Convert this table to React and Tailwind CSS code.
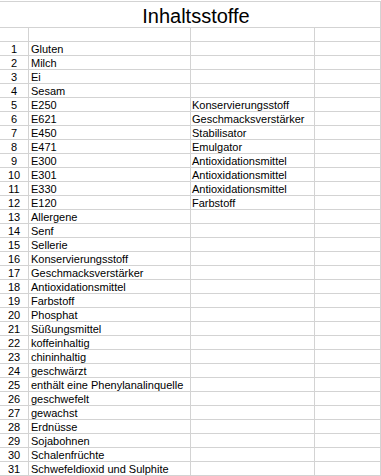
const rows = [
  ["", "", ""],
  ["1", "Gluten", ""],
  ["2", "Milch", ""],
  ["3", "Ei", ""],
  ["4", "Sesam", ""],
  ["5", "E250", "Konservierungsstoff"],
  ["6", "E621", "Geschmacksverstärker"],
  ["7", "E450", "Stabilisator"],
  ["8", "E471", "Emulgator"],
  ["9", "E300", "Antioxidationsmittel"],
  ["10", "E301", "Antioxidationsmittel"],
  ["11", "E330", "Antioxidationsmittel"],
  ["12", "E120", "Farbstoff"],
  ["13", "Allergene", ""],
  ["14", "Senf", ""],
  ["15", "Sellerie", ""],
  ["16", "Konservierungsstoff", ""],
  ["17", "Geschmacksverstärker", ""],
  ["18", "Antioxidationsmittel", ""],
  ["19", "Farbstoff", ""],
  ["20", "Phosphat", ""],
  ["21", "Süßungsmittel", ""],
  ["22", "koffeinhaltig", ""],
  ["23", "chininhaltig", ""],
  ["24", "geschwärzt", ""],
  ["25", "enthält eine Phenylanalinquelle", ""],
  ["26", "geschwefelt", ""],
  ["27", "gewachst", ""],
  ["28", "Erdnüsse", ""],
  ["29", "Sojabohnen", ""],
  ["30", "Schalenfrüchte", ""],
  ["31", "Schwefeldioxid und Sulphite", ""],
];

export default function App() {
  return (
    <div
      className="w-[381px] h-[476px] bg-white text-black overflow-hidden"
      style={{ fontFamily: '"Liberation Sans", Arial, sans-serif' }}
    >
      {/* Title (merged cell) */}
      <div className="mt-px h-[27px] flex items-end justify-center pl-[12px] pb-px border-t border-b border-r border-[#d3d3d3]">
        <span className="text-[20px] leading-[20px]">Inhaltsstoffe</span>
      </div>

      {/* Sheet */}
      <div className="grid grid-cols-[29px_162px_124px_66px]">
        {rows.map(([n, name, kind], i) => (
          <div key={i} className="contents">
            <div className="h-[14px] border-b border-r border-[#d3d3d3] text-center text-[11px] leading-[12px] pt-px overflow-hidden whitespace-nowrap">
              {n}
            </div>
            <div className="h-[14px] border-b border-r border-[#d3d3d3] pl-[2px] text-[11px] leading-[12px] pt-px overflow-hidden whitespace-nowrap">
              {name}
            </div>
            <div className="h-[14px] border-b border-r border-[#d3d3d3] pl-px text-[11px] leading-[12px] pt-px overflow-hidden whitespace-nowrap">
              {kind}
            </div>
            <div className="h-[14px] border-b border-r border-[#d3d3d3]" />
          </div>
        ))}
      </div>
    </div>
  );
}
